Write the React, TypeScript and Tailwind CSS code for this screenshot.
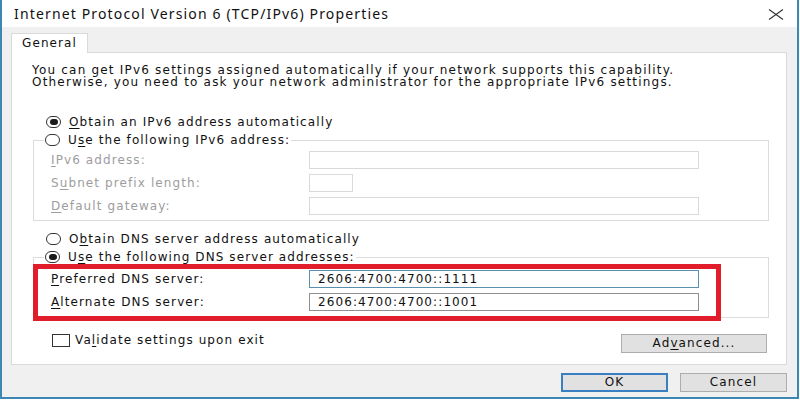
import React from 'react';

const ui = "font-['DejaVu_Sans',sans-serif] text-[12px] tracking-[1.1px] leading-[11px]";

const Radio = ({ checked }: { checked?: boolean }) => (
  <span className="w-[15px] h-[12px] rounded-full border border-[#333333] bg-white flex items-center justify-center shrink-0">
    {checked && <span className="w-[8px] h-[6px] rounded-full bg-[#1a1a1a]" />}
  </span>
);

const Mn = ({ children }: { children: React.ReactNode }) => <span className="underline underline-offset-2">{children}</span>;

const Field = ({ label, value, width, disabled, focused }: { label: React.ReactNode; value?: string; width: string; disabled?: boolean; focused?: boolean }) => (
  <div className="flex items-center h-[18px] pl-[17px]">
    <div className={`w-[258px] ${disabled ? 'text-[#9d9d9d]' : 'text-[#111]'}`}>{label}</div>
    <div
      className={`${width} h-[18px] bg-white border flex items-center pl-[8px] text-[#111] ${
        disabled ? 'border-[#d9d9d9]' : focused ? 'border-[#5b8fb0]' : 'border-[#8f8f8f]'
      }`}
    >
      {value}
    </div>
  </div>
);

const Button = ({ children, width, primary }: { children: React.ReactNode; width: string; primary?: boolean }) => (
  <div
    className={`${width} h-[19px] flex items-center justify-center bg-[#e1e1e1] text-[#111] ${
      primary ? 'border-2 border-[#3a7fc1]' : 'border border-[#adadad]'
    }`}
  >
    {children}
  </div>
);

export default function App() {
  return (
    <div className={`w-[800px] h-[400px] bg-white ${ui}`}>
      <div className="w-[799px] h-[399px] flex flex-col border-l-2 border-r-2 border-b-2 border-[#3d87b3]">
        {/* title bar */}
        <div className="h-[27px] bg-white flex items-center justify-between pl-[12px] pr-[13px]">
          <span className="font-['Noto_Sans',sans-serif] text-[14px] tracking-[1.15px] text-[#111]">
            Internet Protocol Version 6 (TCP/IPv6) Properties
          </span>
          <svg width="16" height="11" viewBox="0 0 16 11" className="mt-[1px]">
            <path d="M1 0.5 L15 10.5 M15 0.5 L1 10.5" stroke="#333" strokeWidth="1.1" fill="none" />
          </svg>
        </div>

        <div className="flex-1 bg-[#f0f0f0] flex flex-col">
          {/* tabs */}
          <div className="pl-[9px] mt-[6px] flex">
            <div className="relative z-10 -mb-px w-[77px] h-[20px] bg-white border border-b-0 border-[#d9d9d9] flex items-center pl-[10px] text-[#111]">
              General
            </div>
          </div>

          {/* panel */}
          <div className="relative ml-[9px] mr-[10px] h-[313px] bg-white border border-[#d9d9d9] flex flex-col">
            <div className="pl-[20px] pt-[11px] text-[#111] leading-[12px] tracking-[1.2px]">
              <div>You can get IPv6 settings assigned automatically if your network supports this capability.</div>
              <div>Otherwise, you need to ask your network administrator for the appropriate IPv6 settings.</div>
            </div>

            <div className="mt-[25px] pl-[34px] h-[18px] flex items-center gap-[8px] text-[#111]">
              <Radio checked />
              <span>
                <Mn>O</Mn>btain an IPv6 address automatically
              </span>
            </div>

            <fieldset className="ml-[21px] w-[736px] border border-[#dcdcdc] pt-[2px] pb-[5px] flex flex-col gap-[5px]">
              <legend className="ml-[10px] px-[1px] h-[18px] flex items-center gap-[8px] text-[#111]">
                <Radio />
                <span>
                  U<Mn>s</Mn>e the following IPv6 address:
                </span>
              </legend>
              <Field label={<><Mn>I</Mn>Pv6 address:</>} width="w-[390px]" disabled />
              <Field label={<>S<Mn>u</Mn>bnet prefix length:</>} width="w-[44px]" disabled />
              <Field label={<><Mn>D</Mn>efault gateway:</>} width="w-[390px]" disabled />
            </fieldset>

            <div className="mt-[9px] pl-[34px] h-[18px] flex items-center gap-[8px] text-[#111]">
              <Radio />
              <span>
                O<Mn>b</Mn>tain DNS server address automatically
              </span>
            </div>

            <fieldset className="ml-[21px] w-[736px] border border-[#dcdcdc] pt-[4px] pb-[6px] flex flex-col gap-[5px]">
              <legend className="ml-[10px] px-[1px] h-[18px] flex items-center gap-[8px] text-[#111]">
                <Radio checked />
                <span>
                  U<Mn>s</Mn>e the following DNS server addresses:
                </span>
              </legend>
              <Field label={<><Mn>P</Mn>referred DNS server:</>} value="2606:4700:4700::1111" width="w-[390px]" focused />
              <Field label={<><Mn>A</Mn>lternate DNS server:</>} value="2606:4700:4700::1001" width="w-[390px]" />
            </fieldset>

            <div className="mt-[16px] pl-[40px] pr-[19px] flex items-start justify-between">
              <div className="flex items-center gap-[5px] h-[13px] text-[#111]">
                <span className="w-[18px] h-[13px] border border-[#333333] bg-white" />
                <span>
                  Va<Mn>l</Mn>idate settings upon exit
                </span>
              </div>
              <Button width="w-[146px]">
                Ad<Mn>v</Mn>anced...
              </Button>
            </div>

            {/* annotation highlight */}
            <div className="absolute left-[21px] top-[211px] w-[688px] h-[57px] border-[5px] border-[#e21d2b]" />
          </div>

          {/* dialog buttons */}
          <div className="mt-[8px] mr-[10px] flex justify-end gap-[12px]">
            <Button width="w-[107px]" primary>
              OK
            </Button>
            <Button width="w-[107px]">Cancel</Button>
          </div>
        </div>
      </div>
    </div>
  );
}
